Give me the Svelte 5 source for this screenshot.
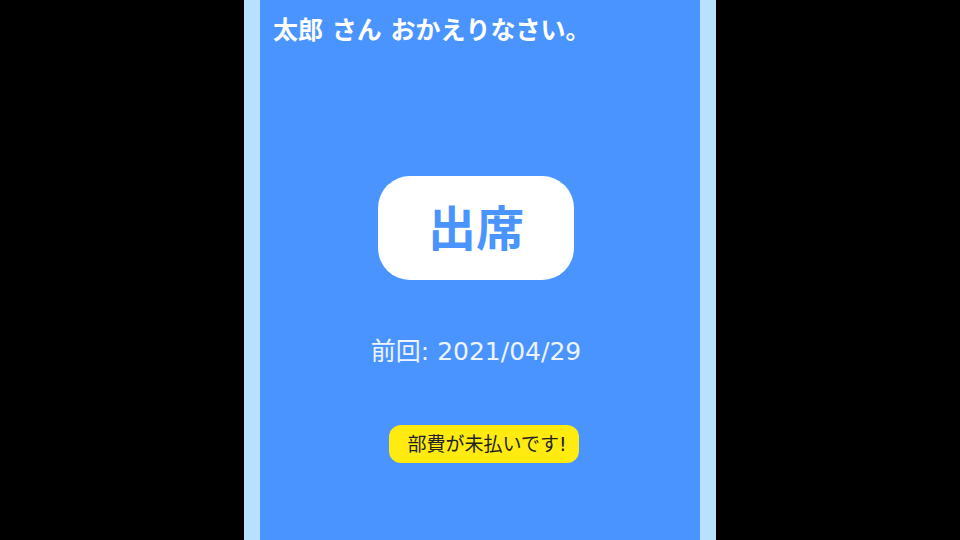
<script>
  const user = '太郎';
  const lastVisit = '2021/04/29';
</script>

<div class="stage">
  <main class="panel">
    <h1>{user} さん おかえりなさい。</h1>
    <div class="content">
      <button class="attend" type="button">出席</button>
      <p class="last">前回: {lastVisit}</p>
      <p class="notice">部費が未払いです!</p>
    </div>
  </main>
</div>

<style>
  :global(body) {
    margin: 0;
    background: #000;
  }
  .stage {
    display: flex;
    justify-content: center;
    min-height: 100vh;
    background: #000;
    font-family: "DejaVu Sans", "Noto Sans CJK JP", sans-serif;
  }
  .panel {
    box-sizing: border-box;
    width: 100%;
    max-width: 472px;
    padding: 13px 13px;
    border: solid #b8e0ff;
    border-width: 0 16px;
    background: #4a94ff;
    color: #fff;
  }
  h1 {
    margin: 0;
    font-size: 25px;
    line-height: 36px;
    font-weight: 700;
  }
  .content {
    display: flex;
    flex-direction: column;
    align-items: center;
    padding: 127px 8px 0 0;
  }
  .attend {
    padding: 17px 50px 15px;
    border: 0;
    border-radius: 32px;
    background: #fff;
    color: #4a94ff;
    font: inherit;
    font-size: 48px;
    line-height: 72px;
    font-weight: 700;
  }
  .last {
    margin: 56px 0 0;
    color: #edf4ff;
    font-size: 25px;
    line-height: 32px;
  }
  .notice {
    margin: 57px 0 0 16px;
    padding: 3px 12px 3px 18px;
    border-radius: 12px;
    background: #ffeb10;
    color: #222;
    font-size: 19px;
    line-height: 32px;
  }
</style>
